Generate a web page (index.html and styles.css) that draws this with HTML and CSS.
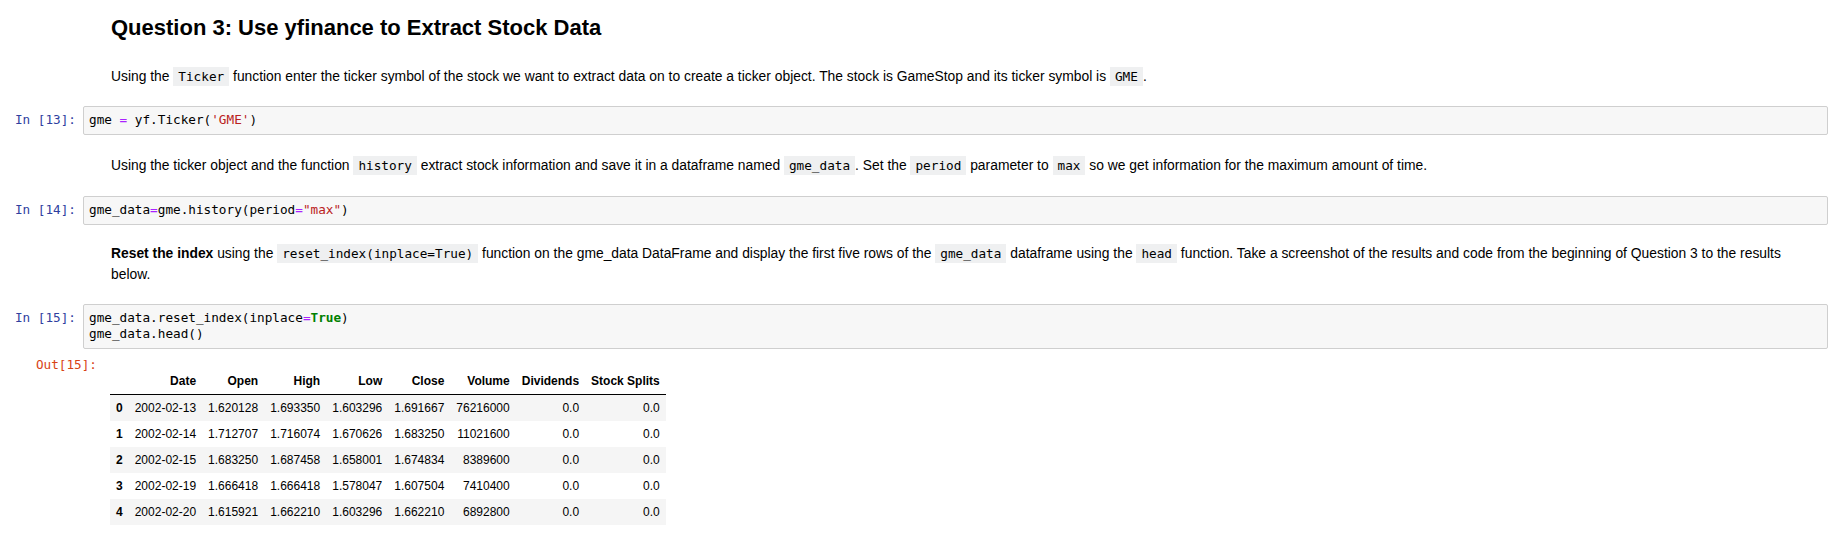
FILE: index.html
```html
<!DOCTYPE html>
<html>
<head>
<meta charset="utf-8">
<link rel="stylesheet" href="styles.css">
</head>
<body>
<div class="notebook">
  <div class="cell md heading-cell">
    <div class="prompt"></div>
    <div class="md-body"><h2 class="title">Question 3: Use yfinance to Extract Stock Data</h2></div>
  </div>

  <div class="cell md p1">
    <div class="prompt"></div>
    <div class="md-body"><p>Using the <code>Ticker</code> function enter the ticker symbol of the stock we want to extract data on to create a ticker object. The stock is GameStop and its ticker symbol is <code>GME</code>.</p></div>
  </div>

  <div class="cell code c1">
    <div class="prompt in">In&nbsp;[13]:</div>
    <div class="input"><pre>gme <span class="op">=</span> yf.Ticker(<span class="str">'GME'</span>)</pre></div>
  </div>

  <div class="cell md p2">
    <div class="prompt"></div>
    <div class="md-body"><p>Using the ticker object and the function <code>history</code> extract stock information and save it in a dataframe named <code>gme_data</code>. Set the <code>period</code> parameter to <code>max</code> so we get information for the maximum amount of time.</p></div>
  </div>

  <div class="cell code c2">
    <div class="prompt in">In&nbsp;[14]:</div>
    <div class="input"><pre>gme_data<span class="op">=</span>gme.history(period<span class="op">=</span><span class="str">"max"</span>)</pre></div>
  </div>

  <div class="cell md p3">
    <div class="prompt"></div>
    <div class="md-body"><p><b>Reset the index</b> using the <code>reset_index(inplace=True)</code> function on the gme_data DataFrame and display the first five rows of the <code>gme_data</code> dataframe using the <code>head</code> function. Take a screenshot of the results and code from the beginning of Question 3 to the results below.</p></div>
  </div>

  <div class="cell code c3">
    <div class="prompt in">In&nbsp;[15]:</div>
    <div class="input"><pre>gme_data.reset_index(inplace<span class="op">=</span><span class="kw">True</span>)
gme_data.head()</pre></div>
  </div>

  <div class="cell out">
    <div class="prompt outp">Out[15]:</div>
    <div class="output">
      <table class="df">
        <thead>
          <tr><th></th><th>Date</th><th>Open</th><th>High</th><th>Low</th><th>Close</th><th>Volume</th><th>Dividends</th><th>Stock Splits</th></tr>
        </thead>
        <tbody>
          <tr><th>0</th><td>2002-02-13</td><td>1.620128</td><td>1.693350</td><td>1.603296</td><td>1.691667</td><td>76216000</td><td>0.0</td><td>0.0</td></tr>
          <tr><th>1</th><td>2002-02-14</td><td>1.712707</td><td>1.716074</td><td>1.670626</td><td>1.683250</td><td>11021600</td><td>0.0</td><td>0.0</td></tr>
          <tr><th>2</th><td>2002-02-15</td><td>1.683250</td><td>1.687458</td><td>1.658001</td><td>1.674834</td><td>8389600</td><td>0.0</td><td>0.0</td></tr>
          <tr><th>3</th><td>2002-02-19</td><td>1.666418</td><td>1.666418</td><td>1.578047</td><td>1.607504</td><td>7410400</td><td>0.0</td><td>0.0</td></tr>
          <tr><th>4</th><td>2002-02-20</td><td>1.615921</td><td>1.662210</td><td>1.603296</td><td>1.662210</td><td>6892800</td><td>0.0</td><td>0.0</td></tr>
        </tbody>
      </table>
    </div>
  </div>
</div>
</body>
</html>
```
FILE: styles.css
```css
html, body {
  margin: 0;
  padding: 0;
  background: #fff;
}
body {
  font-family: "Liberation Sans", Arial, sans-serif;
  font-size: 13.85px;
  color: #000;
}
.notebook {
  padding: 0 5px 0 0;
}
.cell {
  display: flex;
  align-items: flex-start;
}
.prompt {
  flex: 0 0 83px;
  width: 83px;
  box-sizing: border-box;
  padding-right: 7px;
  text-align: right;
  font-family: "DejaVu Sans Mono", monospace;
  font-size: 12.7px;
  line-height: 16.75px;
  white-space: nowrap;
}
.prompt.in {
  color: #303f9f;
  padding-top: 6px;
}
.md-body {
  flex: 1;
  min-width: 0;
  padding: 0 8px 0 28px;
}
.title {
  margin: 0;
  font-size: 22px;
  font-weight: bold;
  line-height: 26px;
}
.md-body p {
  margin: 0;
  line-height: 21px;
}
code {
  font-family: "DejaVu Sans Mono", monospace;
  font-size: 12.7px;
  background: #eff0f1;
  padding: 2px 5px;
}
.input {
  flex: 1;
  min-width: 0;
  background: #f7f7f7;
  border: 1px solid #cfcfcf;
  border-radius: 2px;
  padding: 5px 5px;
}
.input pre {
  margin: 0;
  font-family: "DejaVu Sans Mono", monospace;
  font-size: 12.7px;
  line-height: 16.75px;
  color: #000;
}
.op { color: #aa22ff; }
.str { color: #ba2121; }
.kw { color: #008000; font-weight: bold; }

.heading-cell { margin-top: 15px; }
.p1 { margin-top: 25px; }
.c1 { margin-top: 19px; }
.p2 { margin-top: 20px; }
.c2 { margin-top: 20px; }
.p3 { margin-top: 18px; }
.c3 { margin-top: 19px; }

.out .prompt.outp {
  flex: 0 0 97px;
  width: 97px;
  padding-right: 0;
  padding-top: 8px;
  color: #d84315;
}
.output {
  padding: 19px 0 0 13px;
}
.df {
  border-collapse: collapse;
  border-spacing: 0;
  border: none;
  font-family: "Liberation Sans", Arial, sans-serif;
  font-size: 12px;
  color: #000;
}
.df th, .df td {
  padding: 6px;
  text-align: right;
  vertical-align: middle;
  line-height: normal;
  white-space: nowrap;
  border: none;
}
.df th { font-weight: bold; }
.df thead { border-bottom: 1px solid #000; }
.df tbody tr:nth-child(odd) { background: #f5f5f5; }
```
